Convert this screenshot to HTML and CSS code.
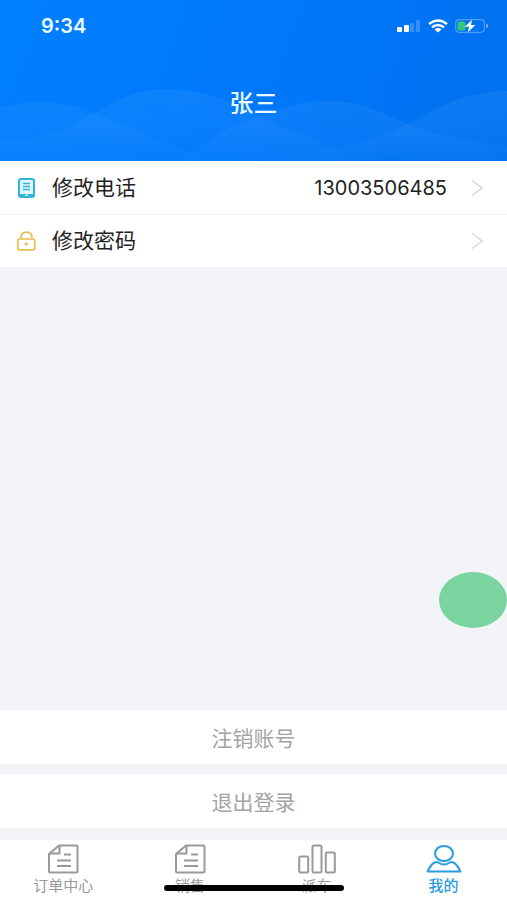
FILE: index.html
```html
<!DOCTYPE html>
<html lang="zh-CN">
<head>
<meta charset="utf-8">
<meta name="viewport" content="width=device-width, initial-scale=1">
<title>我的</title>
<link rel="stylesheet" href="styles.css">
</head>
<body>
<div class="app">
  <header class="hero">
    <svg class="waves" viewBox="0 0 507 80" preserveAspectRatio="none" aria-hidden="true">
      <defs>
        <linearGradient id="wave" gradientUnits="userSpaceOnUse" x1="0" y1="0" x2="0" y2="80">
          <stop offset="0" stop-color="#5aaeff" stop-opacity=".16"/>
          <stop offset=".6" stop-color="#5aaeff" stop-opacity=".1"/>
          <stop offset="1" stop-color="#5aaeff" stop-opacity=".03"/>
        </linearGradient>
      </defs>
      <path fill="url(#wave)" d="M0 27C30 18 62 19 92 31C132 48 160 60 210 80H0Z"/>
      <path fill="url(#wave)" d="M40 56C90 46 110 8 168 8C220 8 250 34 300 53L360 80H0V60Q20 61 40 56Z"/>
      <path fill="url(#wave)" d="M230 46C270 31 300 18 336 20C375 23 400 44 440 54L507 66V80H180Z"/>
      <path fill="url(#wave)" d="M340 65C410 58 435 10 507 10V80H260Z"/>
    </svg>
    <div class="status">
      <span class="time">9:34</span>
      <span class="indicators">
        <svg width="24" height="14" viewBox="0 0 24 14" aria-hidden="true">
          <g fill="#fff"><rect x="0" y="8" width="5" height="5" rx="1"/><rect x="7" y="6" width="5" height="7" rx="1"/></g>
          <g fill="#fff" opacity=".2"><rect x="13" y="4" width="4" height="9" rx="1"/><rect x="19" y="1" width="4" height="12" rx="1"/></g>
        </svg>
        <svg width="20" height="14" viewBox="0 0 20 14" aria-hidden="true">
          <g fill="none" stroke="#fff" stroke-width="2.4"><path d="M1 5Q10-2 19 5"/><path d="M4 8.2Q10 3.6 16 8.2"/></g>
          <path fill="#fff" d="M6.5 10.4Q10 7.8 13.5 10.4L10 13.4Z"/>
        </svg>
        <svg width="34" height="14" viewBox="0 0 34 14" aria-hidden="true">
          <rect x=".7" y=".7" width="28.6" height="12.6" rx="3.5" fill="none" stroke="#fff" stroke-opacity=".3" stroke-width="1.2"/>
          <rect x="2.5" y="2.5" width="8" height="9" rx="2" fill="#34c77b"/>
          <path d="M31 4.8Q33.4 5 33.4 7T31 9.2Z" fill="#fff" fill-opacity=".4"/>
          <path d="M17 .8L9.8 7.8H14L12.8 13.2L20.4 6H16Z" fill="#fff"/>
        </svg>
      </span>
    </div>
    <h1 class="name">张三</h1>
  </header>

  <main class="content">
    <nav class="list">
      <a class="row" href="#phone">
        <svg class="row-icon" viewBox="0 0 20 20" aria-hidden="true">
          <rect x="3" y="1" width="15" height="18" rx="2" fill="#dff6ff" stroke="#31b4dc" stroke-width="2"/>
          <path d="M3 16H18V18Q18 19 17 19H4Q3 19 3 18Z" fill="#31b4dc"/>
          <path d="M7 5.5H14M7 8.5H14M7 11.5H14" stroke="#31b4dc" stroke-width="1.4"/>
          <path d="M9 17.3H12" stroke="#fff" stroke-width="1.2"/>
        </svg>
        <span class="label">修改电话</span>
        <span class="value">13003506485</span>
        <svg class="chevron" viewBox="0 0 12 18" aria-hidden="true"><path d="M1 1.5L11 9L1 16.5"/></svg>
      </a>
      <a class="row" href="#password">
        <svg class="row-icon" viewBox="0 0 20 20" fill="none" stroke="#e9bd4c" stroke-width="1.7" aria-hidden="true">
          <path d="M5 8V6.5C5 3 7 1.2 10.5 1.2S16 3 16 6.5V8"/>
          <rect x="1.8" y="8" width="17" height="10.8" rx="2"/>
          <path d="M8.3 13H12.300M10.300 11.500V14.500" stroke-width="1.300"/>
        </svg>
        <span class="label">修改密码</span>
        <svg class="chevron" viewBox="0 0 12 18" aria-hidden="true"><path d="M1 1.5L11 9L1 16.5"/></svg>
      </a>
    </nav>
    <div class="actions">
      <button class="action" type="button">注销账号</button>
      <button class="action" type="button">退出登录</button>
    </div>
  </main>

  <nav class="tabs">
    <a class="tab" href="#orders">
      <svg class="tab-icon" viewBox="0 0 36 30" aria-hidden="true">
        <path d="M14 1.5H31Q32.5 1.5 32.5 3V27Q32.5 28.5 31 28.5H5.5Q4 28.5 4 27V10Z"/>
        <path d="M14.500 2V9.500H4.500M19 10.500H26M12 16.500H26M12 22H26"/>
      </svg>
      <span>订单中心</span>
    </a>
    <a class="tab" href="#sales">
      <svg class="tab-icon" viewBox="0 0 36 30" aria-hidden="true">
        <path d="M14 1.5H31Q32.5 1.5 32.5 3V27Q32.5 28.5 31 28.5H5.5Q4 28.5 4 27V10Z"/>
        <path d="M14.500 2V9.500H4.500M19 10.500H26M12 16.500H26M12 22H26"/>
      </svg>
      <span>销售</span>
    </a>
    <a class="tab" href="#dispatch">
      <svg class="tab-icon wide" viewBox="0 0 38 30" aria-hidden="true">
        <rect x="1.2" y="12.5" width="9" height="16" rx="1.5"/>
        <rect x="14.5" y="1.5" width="9" height="27" rx="1.5"/>
        <rect x="27.8" y="8.5" width="9" height="20" rx="1.5"/>
      </svg>
      <span>派车</span>
    </a>
    <a class="tab active" href="#me" aria-current="page">
      <svg class="tab-icon" viewBox="0 0 36 30" aria-hidden="true">
        <ellipse cx="18" cy="9.500" rx="9" ry="7.600"/>
        <path d="M8.500 18.500Q11 17.500 13 19Q18 22 23 19Q25 17.500 27.500 18.500C30.500 20 32.500 23.500 34.500 27.500H1.500C3.500 23.500 5.500 20 8.500 18.500Z"/>
      </svg>
      <span>我的</span>
    </a>
  </nav>

  <button class="float" type="button" aria-label="快捷操作"></button>
  <div class="home-bar"></div>
</div>
</body>
</html>
```

FILE: styles.css
```css
* {
  box-sizing: border-box;
}

body {
  margin: 0;
  font-family: Inter, "Noto Sans CJK SC", sans-serif;
  color: #222;
}

a {
  color: inherit;
  text-decoration: none;
}

svg {
  display: block;
}

.app {
  position: relative;
  display: flex;
  flex-direction: column;
  min-height: 100vh;
  background: #f3f4f8;
}

.hero {
  position: relative;
  height: 161px;
  color: #e9fbff;
  background: linear-gradient(110deg, #0080ff, #0078fb 50%, #0070ee);
}

.waves {
  position: absolute;
  left: 0;
  bottom: 0;
  width: 100%;
  height: 80px;
}

.status {
  position: relative;
  display: flex;
  justify-content: space-between;
  align-items: center;
  padding: 14px 18px 0 41px;
}

.time {
  font-size: 20px;
  line-height: 24px;
  font-weight: 600;
}

.indicators {
  display: flex;
  align-items: center;
  gap: 7px;
}

.name {
  position: relative;
  margin: 50px 0 0;
  font-size: 24px;
  line-height: 32px;
  font-weight: 500;
  text-align: center;
}

.content {
  flex: 1;
  display: flex;
  flex-direction: column;
  justify-content: space-between;
}

.list,
.action,
.tabs {
  background: #fff;
}

.row {
  display: flex;
  align-items: center;
  height: 53px;
  padding: 0 24px 0 16px;
}

.row + .row {
  border-top: 1px solid #f3f3f6;
}

.row-icon {
  width: 20px;
  height: 20px;
  margin-right: 16px;
}

.label {
  flex: 1;
  font-size: 21px;
  line-height: 28px;
}

.value {
  font-size: 20px;
  line-height: 28px;
}

.chevron {
  width: 12px;
  height: 18px;
  margin-left: 24px;
  fill: none;
  stroke: #d6d6d8;
  stroke-width: 1.5;
}

.actions {
  display: grid;
  gap: 10px;
  padding-bottom: 12px;
}

.action {
  height: 54px;
  padding: 0;
  border: 0;
  font: inherit;
  font-size: 21px;
  color: #a3a3a3;
}

.tabs {
  display: grid;
  grid-template-columns: repeat(4, 1fr);
  height: 60px;
  padding-top: 4px;
}

.tab {
  display: flex;
  flex-direction: column;
  align-items: center;
  gap: 2px;
  font-size: 15px;
  line-height: 20px;
  color: #999;
}

.tab-icon {
  width: 36px;
  height: 30px;
  fill: none;
  stroke: currentColor;
  stroke-width: 2;
  stroke-linejoin: round;
}

.tab-icon.wide {
  width: 38px;
}

.active {
  color: #2a9ce0;
  font-weight: 500;
}

.float {
  position: absolute;
  right: 0;
  bottom: 272px;
  width: 68px;
  height: 56px;
  padding: 0;
  border: 0;
  border-radius: 50%;
  background: #7bd3a0;
}

.home-bar {
  position: absolute;
  left: 50%;
  bottom: 9px;
  width: 180px;
  height: 6px;
  border-radius: 3px;
  background: #000;
  transform: translateX(-50%);
}
```
